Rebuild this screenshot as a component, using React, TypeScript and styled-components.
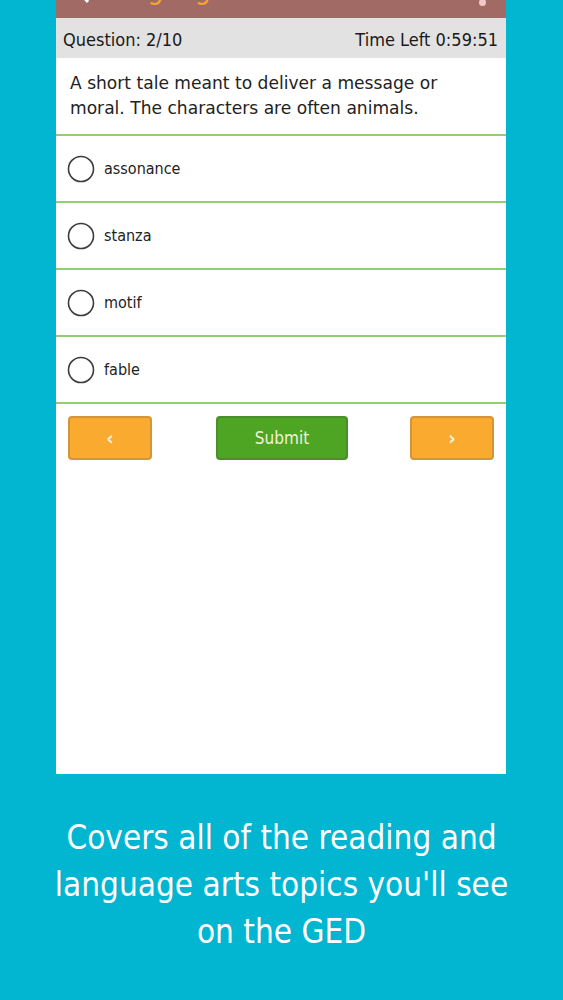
import { FC } from "react";
import styled, { createGlobalStyle } from "styled-components";

const GlobalStyle = createGlobalStyle`
  html, body {
    margin: 0;
    padding: 0;
    background: #02b5d0;
  }
  body {
    font-family: "DejaVu Sans Condensed", "DejaVu Sans", sans-serif;
  }
`;

const options = ["assonance", "stanza", "motif", "fable"];

const Radio: FC = () => (
  <svg width="28" height="28" viewBox="0 0 28 28">
    <circle cx="14" cy="14" r="12.5" fill="#fff" stroke="#3c3c3c" strokeWidth="1.6" />
  </svg>
);

const App: FC = () => {
  return (
    <Page>
      <GlobalStyle />
      <Screen>
        <Header>
          <HeaderInner>
            <Back>
              <svg width="16" height="22" viewBox="0 0 16 22">
                <path d="M12 2 L4 11 L12 20" fill="none" stroke="#fff" strokeWidth="3" />
              </svg>
            </Back>
            <HeaderTitle>Language Arts</HeaderTitle>
            <HeaderDot />
          </HeaderInner>
        </Header>
        <StatusBar>
          <span>Question: 2/10</span>
          <span>Time Left 0:59:51</span>
        </StatusBar>
        <QuestionText>
          A short tale meant to deliver a message or moral. The characters are
          often animals.
        </QuestionText>
        <Options>
          {options.map((o) => (
            <Option key={o}>
              <Radio />
              <OptionLabel>{o}</OptionLabel>
            </Option>
          ))}
        </Options>
        <Buttons>
          <NavButton>‹</NavButton>
          <SubmitButton>Submit</SubmitButton>
          <NavButton>›</NavButton>
        </Buttons>
      </Screen>
      <Caption>
        Covers all of the reading and language arts topics you'll see on the
        GED
      </Caption>
    </Page>
  );
};

export default App;

const Page = styled.div`
  width: 563px;
  height: 1000px;
  background: #02b5d0;
  display: flex;
  flex-direction: column;
  align-items: center;
  overflow: hidden;
`;

const Screen = styled.div`
  width: 450px;
  height: 774px;
  margin-left: -1px;
  background: #fff;
  display: flex;
  flex-direction: column;
`;

const Header = styled.div`
  height: 18px;
  background: #a26a64;
  overflow: hidden;
  display: flex;
  align-items: flex-end;
`;

const HeaderInner = styled.div`
  height: 50px;
  width: 100%;
  display: flex;
  align-items: center;
  padding: 0 20px 0 20px;
  box-sizing: border-box;
  margin-bottom: 4px;
`;

const Back = styled.div`
  width: 16px;
  display: flex;
  margin-top: 8px;
`;

const HeaderTitle = styled.div`
  margin-left: 10px;
  color: #f3a530;
  font-size: 28px;
  flex: 1;
`;

const HeaderDot = styled.div`
  width: 7px;
  height: 7px;
  border-radius: 50%;
  background: #f1c9c6;
  margin-top: 26px;
`;

const StatusBar = styled.div`
  height: 40px;
  background: #e2e2e2;
  display: flex;
  align-items: center;
  justify-content: space-between;
  padding: 2px 8px 0 7px;
  box-sizing: border-box;
  font-size: 18px;
  color: #1a1a1a;
`;

const QuestionText = styled.div`
  height: 78px;
  box-sizing: border-box;
  padding: 13px 40px 0 14px;
  font-family: "DejaVu Sans", sans-serif;
  font-size: 17.1px;
  line-height: 25px;
  color: #222;
  border-bottom: 2px solid #92cf73;
`;

const Options = styled.div`
  display: flex;
  flex-direction: column;
`;

const Option = styled.div`
  height: 67px;
  box-sizing: border-box;
  display: flex;
  align-items: center;
  gap: 9px;
  padding-left: 11px;
  border-bottom: 2px solid #92cf73;
`;

const OptionLabel = styled.span`
  font-size: 16px;
  color: #222;
`;

const Buttons = styled.div`
  display: flex;
  justify-content: space-between;
  align-items: center;
  padding: 12px 12px 0 12px;
`;

const BaseButton = styled.div`
  height: 44px;
  box-sizing: border-box;
  border-radius: 4px;
  display: flex;
  align-items: center;
  justify-content: center;
  color: #f4f0d8;
  font-size: 17px;
`;

const NavButton = styled(BaseButton)`
  width: 84px;
  background: #fbaa30;
  border: 2px solid #d49438;
  font-size: 20px;
  font-weight: bold;
`;

const SubmitButton = styled(BaseButton)`
  width: 132px;
  margin-left: 2px;
  background: #4ea524;
  border: 2px solid #4b8f2a;
`;

const Caption = styled.div`
  width: 470px;
  margin-top: 40px;
  text-align: center;
  color: #fff;
  font-size: 33px;
  line-height: 47px;
`;
